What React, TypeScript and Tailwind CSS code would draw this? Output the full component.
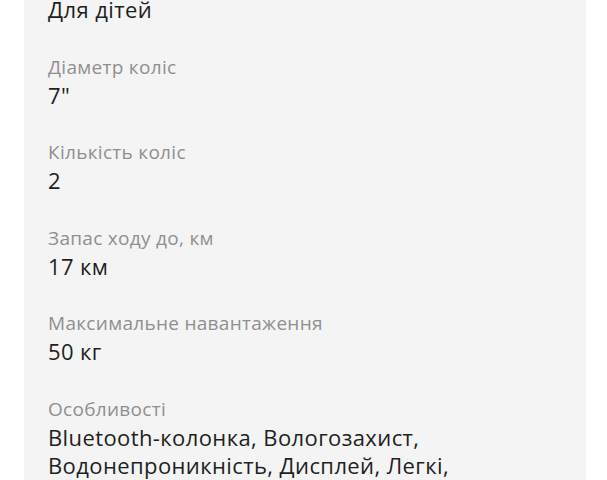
import React from "react";

const items = [
  { label: "Діаметр коліс", value: "7\"" },
  { label: "Кількість коліс", value: "2" },
  { label: "Запас ходу до, км", value: "17 км" },
  { label: "Максимальне навантаження", value: "50 кг" },
  {
    label: "Особливості",
    value:
      "Bluetooth-колонка, Вологозахист, Водонепроникність, Дисплей, Легкі, Складні",
  },
];

export default function App() {
  return (
    <div
      className="w-[607px] h-[480px] overflow-hidden bg-white"
      style={{ fontFamily: '"Open Sans", "Noto Sans", sans-serif' }}
    >
      <div className="ml-[24px] w-[562px] min-h-[480px] bg-[#f4f4f4] px-[24px]">
        <div className="flex flex-col gap-[31.5px] -mt-[5px]">
          <div className="text-[22px] leading-[28px] tracking-[0.4px] text-[#221f1f]">
            Для дітей
          </div>
          {items.map((it) => (
            <div key={it.label} className="flex flex-col">
              <div className="text-[19px] leading-[24px] font-medium tracking-[0.3px] text-[#8f8f8f]">
                {it.label}
              </div>
              <div className="mt-[2px] max-w-[425px] text-[22px] leading-[28px] tracking-[0.4px] text-[#221f1f]">
                {it.value}
              </div>
            </div>
          ))}
        </div>
      </div>
    </div>
  );
}
